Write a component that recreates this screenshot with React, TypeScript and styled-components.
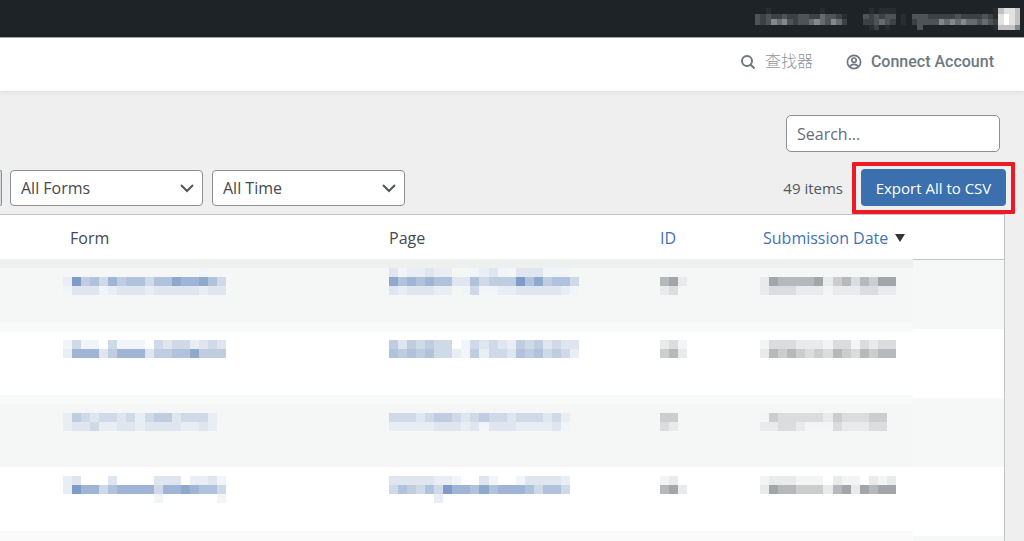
import React from "react";
import styled, { createGlobalStyle } from "styled-components";

const GlobalStyle = createGlobalStyle`
  *, *::before, *::after { box-sizing: border-box; }
  body {
    margin: 0;
    background: #efefef;
    color: #444a51;
    font: 16px/24px "Open Sans", "Noto Sans", "Noto Sans CJK SC", sans-serif;
  }
`;

/* Obscured values are drawn as a coarse grid; each character is one cell. */
const palette: Record<string, string> = {
  w: "#f1f4f8", a: "#e9eef4", b: "#dfe6ef", c: "#cfd9e7", d: "#c0cde0",
  e: "#b1c2dc", f: "#a0b5d6", g: "#8fa9cd", h: "#7d9dc8",
  "1": "#f3f4f4", "2": "#e8eaeb", "3": "#dadcdd", "4": "#cbcdcf", "5": "#b6b9bc", "6": "#a2a6a9",
  "7": "#282d31", "8": "#3c4145", "9": "#4f5256", A: "#676b6f", B: "#858789",
  C: "#c2c2c2", D: "#e2e2e2", E: "#ffffff",
};

const MosaicSvg = styled.svg`
  display: block;
  flex: none;
`;

function Mosaic({ rows, width, height }: { rows: string[]; width: number; height: number }) {
  const columns = Math.max(...rows.map((r) => r.length));
  return (
    <MosaicSvg
      width={width}
      height={height}
      viewBox={`0 0 ${columns} ${rows.length}`}
      preserveAspectRatio="none"
      shapeRendering="crispEdges"
      aria-hidden="true"
    >
      {rows.flatMap((row, y) =>
        [...row].map((cell, x) =>
          cell === "." ? null : (
            <rect key={`${x}-${y}`} x={x} y={y} width="1" height="1" fill={palette[cell]} />
          )
        )
      )}
    </MosaicSvg>
  );
}

const AdminBar = styled.div`
  display: flex;
  justify-content: flex-end;
  height: 37px;
  padding: 8px 4px 0 0;
  background: #1d2327;
`;

const Header = styled.header`
  display: flex;
  justify-content: flex-end;
  align-items: center;
  gap: 32px;
  height: 54px;
  padding: 0 30px 6px 0;
  background: #fff;
  border-top: 1px solid #a5a8aa;
  box-shadow: 0 1px 6px rgba(0, 0, 0, 0.08);
`;

const HeaderLink = styled.a<{ $light?: boolean }>`
  display: flex;
  align-items: center;
  gap: ${(p) => (p.$light ? 9 : 8)}px;
  color: ${(p) => (p.$light ? "#8f959b" : "#6d7882")};
  font-family: Roboto, "Noto Sans CJK SC", sans-serif;
  font-size: 16px;
  font-weight: ${(p) => (p.$light ? 300 : 500)};
  text-decoration: none;
  svg { color: #6d7882; }
`;

const SearchRow = styled.form`
  display: flex;
  justify-content: flex-end;
  padding: 24px 24px 0;
`;

const SearchInput = styled.input`
  width: 214px;
  height: 37px;
  padding: 0 10px;
  border: 1px solid #8c8f94;
  border-radius: 5px;
  background: #fff;
  color: #3c434a;
  font: inherit;
  &::placeholder { color: #686d73; opacity: 1; }
`;

const Toolbar = styled.div`
  display: flex;
  align-items: center;
  margin-top: 17px;
  padding-right: 18px;
`;

const BulkButton = styled.button`
  width: 2px;
  height: 36px;
  margin-right: 8px;
  padding: 0;
  border: 1px solid #8c8f94;
  border-left: 0;
  border-radius: 0 3px 3px 0;
  background: #d5dbe0;
`;

const Filter = styled.div`
  position: relative;
  width: 193px;
  margin-right: 9px;
  svg {
    position: absolute;
    right: 9px;
    top: 13px;
    pointer-events: none;
  }
`;

const Select = styled.select`
  display: block;
  width: 100%;
  height: 36px;
  padding: 0 10px;
  border: 1px solid #8c8f94;
  border-radius: 4px;
  background: #fff;
  color: #444a51;
  font: inherit;
  appearance: none;
`;

const ItemCount = styled.span`
  margin-left: auto;
  margin-right: 18px;
  color: #50575e;
  font-size: 15px;
`;

const Highlight = styled.div`
  position: relative;
  &::after {
    content: "";
    position: absolute;
    inset: -7px -9px -8px;
    border: 4px solid #ed1c24;
    border-radius: 1px;
    pointer-events: none;
  }
`;

const ExportButton = styled.button`
  display: block;
  width: 145px;
  height: 37px;
  padding: 0;
  border: 0;
  border-radius: 4px;
  background: #3b6fad;
  color: #fff;
  font: inherit;
  font-size: 15px;
  white-space: nowrap;
`;

const TableFrame = styled.div`
  margin: 8px 19px 0 0;
  border-top: 1px solid #c3c4c7;
  border-right: 1px solid #c3c4c7;
  background: #fff;
`;

const Table = styled.table`
  width: 100%;
  table-layout: fixed;
  border-spacing: 0;
`;

const HeadCell = styled.th<{ $width?: number; $inset?: number; $ruled?: boolean }>`
  width: ${(p) => (p.$width ? `${p.$width}px` : "auto")};
  height: 45px;
  padding: 2px 0 0 ${(p) => p.$inset ?? 0}px;
  border-bottom: 1px solid ${(p) => (p.$ruled ? "#c3c4c7" : "#eef0ef")};
  text-align: left;
  font-weight: 400;
  white-space: nowrap;
`;

const SortLink = styled.a`
  display: inline-flex;
  align-items: center;
  gap: 7px;
  color: #3f73b5;
  text-decoration: none;
`;

const Row = styled.tr<{ $fill: string; $height?: number }>`
  height: ${(p) => p.$height ?? 69}px;
  background: ${(p) => p.$fill};
`;

const Cell = styled.td<{ $inset?: number; $fill?: string }>`
  padding: ${(p) => p.$inset ?? 0}px 0 0;
  vertical-align: top;
  ${(p) => p.$fill && `background: ${p.$fill};`}
`;

const stripe = "#f5f7f6";
const soft = "#f8faf9";

const records = [
  {
    inset: 8,
    fill: `linear-gradient(#eef0ef 8px, ${stripe} 8px 63px, ${soft} 63px)`,
    end: "#f6f7f7",
    form: ["...............w..", "ahdecfdeeceegffgec", "wbbbwabbbabbbbbabb"],
    page: ["bwaabaa..wabw.bbbwww.", "gefefeebbecdddhegdeec", "babbbaa.wcwwaabbbbbaw"],
    id: ["...", "562", "23."],
    date: ["...............", "265555624535466", "233322212223322"],
  },
  {
    inset: 2,
    fill: `linear-gradient(${soft} 3px, #fff 3px 66px, ${soft} 66px)`,
    end: "#fff",
    form: ["..................", "wcww.cwww.cbccabcb", "afffbdfffbddeegddd"],
    page: [".....................", "dbdcdcc.wcbcbadcdbcbb", "ededeccawdaccbedecdca"],
    id: ["...", "231", "452"],
    date: ["...............", "133322213313233", "254543435435455"],
  },
  {
    inset: 6,
    fill: `linear-gradient(${soft} 6px, ${stripe} 6px)`,
    end: "#f6f7f7",
    form: ["..................", "adcbccbcacddbccca.", "abbcaabbabbbbaaba."],
    page: [".....................", "cccbcddcbcdccbcccbca.", "aaaaabbbabwbbbaaaabw."],
    id: ["...", "44.", "32."],
    date: ["...............", "14333332433344.", "22332111322233."],
  },
  {
    inset: 9,
    fill: "linear-gradient(#fff 64px, #fafafa 64px)",
    end: "#fff",
    form: ["ab...b....bbb.aabw", "ahffceffffcffgfeec", "..........w......w"],
    page: ["bbbbbaaw..bw..wbbbba.", "cedcechffegefffeceec.", ".....a..............."],
    id: ["12.", "562", "..."],
    date: ["1222111.211.212", "265544425626566", "..............."],
  },
];

const accountBar = [
  "..7.........7......." + ".7.777" + "..." + "..............." + "7CDDC",
  "989889889988A9987..." + "989899" + ".7." + "999888889888898" + "7DEDC",
  "989BAB9899ABA9BA8..." + "889A98" + ".7." + "89999BABABAA9A9" + "8DEDC",
  "...................." + ".78.7." + "..." + ".9............." + "7CCCB",
];

function Chevron() {
  return (
    <svg width="14" height="10" viewBox="0 0 14 10" fill="none" stroke="#50565c" strokeWidth="2" aria-hidden="true">
      <path d="M1 2 7 8 13 2" />
    </svg>
  );
}

export default function App() {
  return (
    <>
      <GlobalStyle />
      <AdminBar>
        <Mosaic rows={accountBar} width={265} height={22} />
      </AdminBar>
      <Header>
        <HeaderLink href="#finder" $light>
          <svg width="16" height="16" viewBox="0 0 16 16" fill="none" stroke="currentColor" strokeWidth="2" aria-hidden="true">
            <circle cx="7" cy="7" r="5" />
            <path d="m10.5 10.5 4 4" />
          </svg>
          查找器
        </HeaderLink>
        <HeaderLink href="#connect">
          <svg width="18" height="18" viewBox="0 0 18 18" fill="none" stroke="currentColor" strokeWidth="1.7" aria-hidden="true">
            <circle cx="9" cy="9" r="6.6" />
            <circle cx="9" cy="7.2" r="2.2" />
            <path d="M4.8 13.8c.7-1.6 2.1-2.4 4.2-2.4s3.5.8 4.2 2.4" />
          </svg>
          Connect Account
        </HeaderLink>
      </Header>
      <main>
        <SearchRow role="search">
          <SearchInput type="search" aria-label="Search" placeholder="Search..." />
        </SearchRow>
        <Toolbar>
          <BulkButton type="button" aria-label="Apply" />
          <Filter>
            <Select aria-label="Form">
              <option>All Forms</option>
            </Select>
            <Chevron />
          </Filter>
          <Filter>
            <Select aria-label="Time">
              <option>All Time</option>
            </Select>
            <Chevron />
          </Filter>
          <ItemCount>49 items</ItemCount>
          <Highlight>
            <ExportButton type="button">Export All to CSV</ExportButton>
          </Highlight>
        </Toolbar>
        <TableFrame>
          <Table>
            <thead>
              <tr>
                <HeadCell $width={63} aria-hidden="true" />
                <HeadCell $inset={7}>Form</HeadCell>
                <HeadCell $width={271}>Page</HeadCell>
                <HeadCell $width={100}>
                  <SortLink href="#id">ID</SortLink>
                </HeadCell>
                <HeadCell $width={153} $inset={3}>
                  <SortLink href="#date">
                    Submission Date
                    <svg width="10" height="8" viewBox="0 0 10 8" fill="#32373c" aria-hidden="true">
                      <path d="M0 0h10L5 8z" />
                    </svg>
                  </SortLink>
                </HeadCell>
                <HeadCell $width={91} $ruled aria-hidden="true" />
              </tr>
            </thead>
            <tbody>
              {records.map((r, i) => (
                <Row key={i} $fill={r.fill}>
                  <Cell />
                  <Cell $inset={r.inset}>
                    <Mosaic rows={r.form} width={163} height={27} />
                  </Cell>
                  <Cell $inset={r.inset}>
                    <Mosaic rows={r.page} width={190} height={27} />
                  </Cell>
                  <Cell $inset={r.inset}>
                    <Mosaic rows={r.id} width={27} height={27} />
                  </Cell>
                  <Cell $inset={r.inset}>
                    <Mosaic rows={r.date} width={136} height={27} />
                  </Cell>
                  <Cell $fill={r.end} />
                </Row>
              ))}
              <Row $fill="#fafafa" $height={5}>
                <Cell colSpan={5} />
                <Cell $fill="#f6f7f7" />
              </Row>
            </tbody>
          </Table>
        </TableFrame>
      </main>
    </>
  );
}
